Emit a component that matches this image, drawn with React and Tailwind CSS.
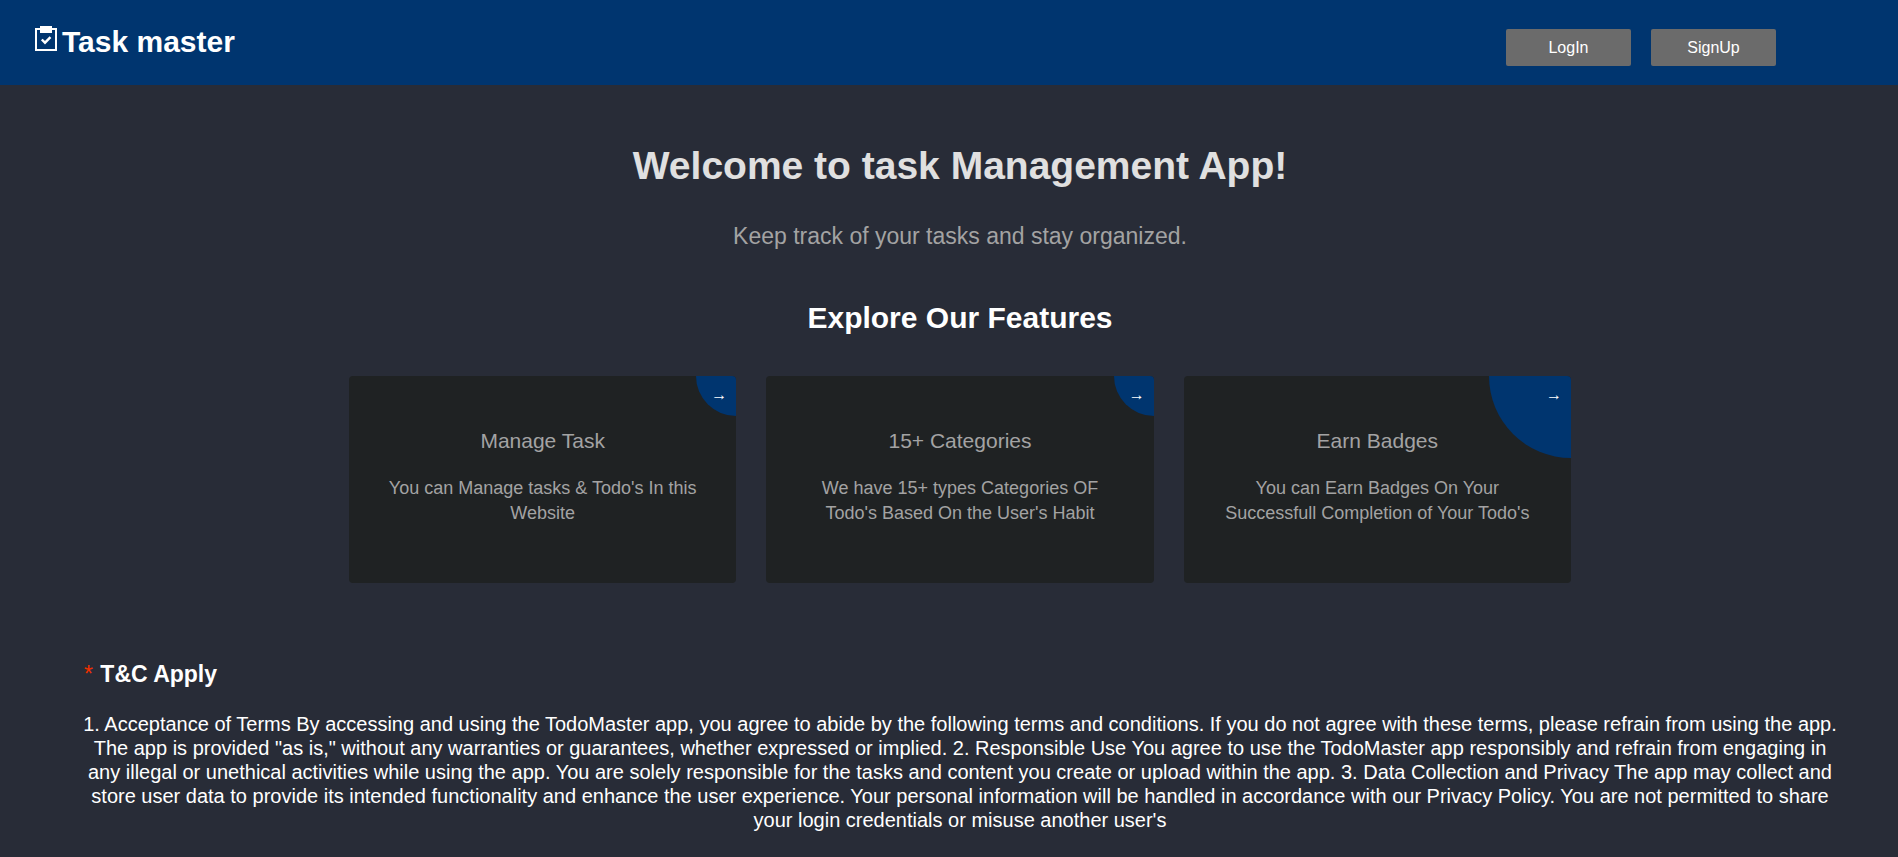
const features = [
  {
    title: "Manage Task",
    text: "You can Manage tasks & Todo's In this Website",
    corner: "size-10",
  },
  {
    title: "15+ Categories",
    text: "We have 15+ types Categories OF Todo's Based On the User's Habit",
    corner: "size-10",
  },
  {
    title: "Earn Badges",
    text: "You can Earn Badges On Your Successfull Completion of Your Todo's",
    corner: "size-[82px]",
  },
];

function ClipboardIcon() {
  return (
    <svg width="22" height="25" viewBox="0 0 22 25" fill="none" aria-hidden="true">
      <path d="M1 3H21V24H1Z" stroke="white" strokeWidth="2" />
      <path d="M5 0H17V7H5Z" fill="white" />
      <path d="M6.8 13.5L10 16.7L15.5 11.2" stroke="white" strokeWidth="2.4" />
    </svg>
  );
}

function HeaderButton({ children }) {
  return (
    <button
      type="button"
      className="h-[37px] w-[125px] rounded-[2px] bg-[#6b6b6b] text-base font-light text-white"
    >
      {children}
    </button>
  );
}

function FeatureCard({ title, text, corner }) {
  return (
    <article className="relative h-[207px] overflow-hidden rounded-[4px] bg-[#1f2223] px-8 pt-[52px] text-center text-[#a3a3a3]">
      <h3 className="text-[21px] leading-[26px]">{title}</h3>
      <p className="mt-[22px] text-lg leading-[25px]">{text}</p>
      <div className={`absolute top-0 right-0 rounded-bl-full bg-[#00356f] ${corner}`} />
      <span className="absolute top-[7px] right-[9px] text-base leading-6 text-white">→</span>
    </article>
  );
}

export default function App() {
  return (
    <div className="min-h-screen bg-[#282c37] font-['Liberation_Sans',Arial,sans-serif] text-white">
      <header className="flex h-[85px] items-start justify-between bg-[#00356f] pr-[122px] pl-[35px]">
        <div className="flex items-start pt-[26px]">
          <ClipboardIcon />
          <span className="pl-[5px] text-[30px] leading-8 font-bold">Task master</span>
        </div>
        <nav className="flex gap-5 pt-[29px]">
          <HeaderButton>LogIn</HeaderButton>
          <HeaderButton>SignUp</HeaderButton>
        </nav>
      </header>

      <main className="pl-[22px]">
        <section className="pt-[56px] text-center">
          <h1 className="text-[39px] leading-[50px] font-bold text-[#e0e0e0]">
            Welcome to task Management App!
          </h1>
          <p className="mt-[30px] text-[23px] leading-[30px] text-[#a3a3a3]">
            Keep track of your tasks and stay organized.
          </p>
        </section>

        <section className="pt-[47px]">
          <h2 className="text-center text-[30px] leading-10 font-bold">Explore Our Features</h2>
          <div className="mx-auto mt-[38px] grid max-w-[1222px] grid-cols-3 gap-[30px]">
            {features.map((feature) => (
              <FeatureCard key={feature.title} {...feature} />
            ))}
          </div>
        </section>

        <section className="px-14 pt-[76px]">
          <h2 className="pl-[6px] text-[23px] leading-[30px] font-bold">
            <span className="mr-[1px] font-normal text-[#f03000]">*</span> T&amp;C Apply
          </h2>
          <p className="mt-[23px] text-center text-xl leading-6">
            1. Acceptance of Terms By accessing and using the TodoMaster app, you agree to abide by the
            following terms and conditions. If you do not agree with these terms, please refrain from
            using the app. The app is provided "as is," without any warranties or guarantees, whether
            expressed or implied. 2. Responsible Use You agree to use the TodoMaster app responsibly and
            refrain from engaging in any illegal or unethical activities while using the app. You are
            solely responsible for the tasks and content you create or upload within the app. 3. Data
            Collection and Privacy The app may collect and store user data to provide its intended
            functionality and enhance the user experience. Your personal information will be handled in
            accordance with our Privacy Policy. You are not permitted to share your login credentials or
            misuse another user's
          </p>
        </section>
      </main>
    </div>
  );
}
